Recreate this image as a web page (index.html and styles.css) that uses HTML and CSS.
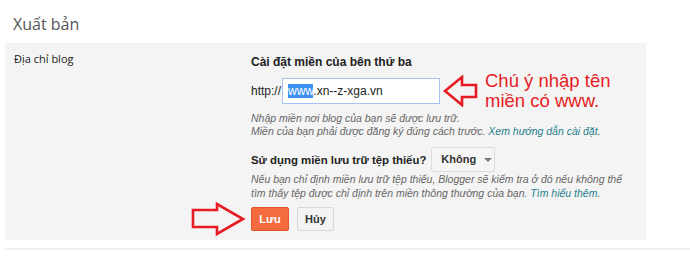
FILE: index.html
```html
<!DOCTYPE html>
<html lang="vi">
<head>
<meta charset="utf-8">
<link rel="stylesheet" href="styles.css">
</head>
<body>
<h1 class="title">Xuất bản</h1>
<section class="panel">
  <div class="label">Địa chỉ blog</div>
  <div class="main">
    <div class="heading">Cài đặt miền của bên thứ ba</div>
    <div class="url-row">
      <span class="proto">http://</span>
      <div class="input"><span class="sel">www</span>.xn--z-xga.vn</div>
      <svg class="arrow-left" width="35" height="32" viewBox="0 0 35 32"><polygon points="2,16 19,2 19,10 33,10 33,22 19,22 19,30" fill="none" stroke="#e61b23" stroke-width="2.6" stroke-linejoin="miter"/></svg>
      <div class="note">Chú ý nhập tên<br>miền có www.</div>
    </div>
    <p class="help">Nhập miền nơi blog của bạn sẽ được lưu trữ.<br>Miền của bạn phải được đăng ký đúng cách trước. <a class="link">Xem hướng dẫn cài đặt.</a></p>
    <div class="fallback-row">
      <span class="heading heading-sm">Sử dụng miền lưu trữ tệp thiếu?</span>
      <div class="select">Không <span class="caret"></span></div>
    </div>
    <p class="help help2">Nếu bạn chỉ định miền lưu trữ tệp thiếu, Blogger sẽ kiểm tra ở đó nếu không thể<br>tìm thấy tệp được chỉ định trên miền thông thường của bạn. <a class="link">Tìm hiểu thêm.</a></p>
    <div class="buttons">
      <button class="btn btn-save">Lưu</button>
      <button class="btn btn-cancel">Hủy</button>
    </div>
  </div>
  <svg class="arrow-right" width="56" height="36" viewBox="0 0 56 36"><polygon points="3,9 27,9 27,3 53,18 27,33 27,26 3,26" fill="none" stroke="#e61b23" stroke-width="2.6" stroke-linejoin="miter"/></svg>
</section>
<div class="rule"></div>
</body>
</html>
```

FILE: styles.css
```css
html, body {
  margin: 0;
  padding: 0;
  background: #fff;
}
body {
  font-family: "Liberation Sans", Arial, sans-serif;
  color: #222;
  width: 690px;
  height: 267px;
  overflow: hidden;
}
.title {
  margin: 0;
  padding: 13px 0 0 13px;
  height: 30px;
  font-family: "Open Sans", sans-serif;
  font-weight: 400;
  font-size: 16px;
  line-height: 22px;
  color: #555;
  box-sizing: border-box;
}
.panel {
  position: relative;
  display: flex;
  margin: 13px 0 0 5px;
  width: 641px;
  height: 197px;
  box-sizing: border-box;
  padding: 8px 9px;
  background: #f4f4f4;
}
.label {
  width: 237px;
  flex: none;
  font-family: "Open Sans", sans-serif;
  font-size: 11px;
  line-height: 16px;
  color: #222;
}
.main {
  display: flex;
  flex-direction: column;
}
.heading {
  font-weight: 700;
  font-size: 12px;
  line-height: 16px;
  color: #222;
  margin-top: 3px;
}
.heading-sm {
  font-size: 11.4px;
}
.url-row {
  display: flex;
  align-items: center;
  height: 40px;
  margin-top: 1px;
}
.proto {
  font-size: 12px;
  color: #222;
  width: 31px;
}
.input {
  width: 158px;
  height: 26px;
  box-sizing: border-box;
  border: 1px solid #a6c2f0;
  background: #fff;
  padding: 0 0 0 5px;
  font-size: 12px;
  line-height: 24px;
  color: #222;
}
.sel {
  background: #3d91f2;
  color: #fff;
}
.arrow-left {
  margin-left: 3px;
  flex: none;
}
.note {
  margin-left: 7px;
  font-size: 18.5px;
  line-height: 20px;
  color: #e61b23;
}
.help {
  margin: 1px 0 0;
  font-size: 10.5px;
  font-style: italic;
  line-height: 13px;
  color: #666;
}
.help2 {
  margin-top: 0;
  line-height: 14px;
}
.link {
  color: #1e7f8c;
  text-decoration: none;
}
.fallback-row {
  display: flex;
  align-items: center;
  margin-top: 9px;
  height: 25px;
}
.fallback-row .heading {
  margin-top: 0;
}
.select {
  margin-left: 5px;
  width: 64px;
  height: 25px;
  box-sizing: border-box;
  border: 1px solid #dcdcdc;
  border-radius: 2px;
  background: #f5f5f5;
  font-weight: 700;
  font-size: 11px;
  line-height: 23px;
  color: #333;
  padding-left: 9px;
  display: flex;
  align-items: center;
  gap: 8px;
}
.caret {
  width: 0;
  height: 0;
  border-left: 4px solid transparent;
  border-right: 4px solid transparent;
  border-top: 4px solid #777;
}
.buttons {
  display: flex;
  gap: 8px;
  margin-top: 7px;
}
.btn {
  height: 24px;
  padding: 0;
  box-sizing: border-box;
  font-family: "Liberation Sans", Arial, sans-serif;
  font-weight: 700;
  font-size: 11px;
  border-radius: 2px;
}
.btn-save {
  width: 38px;
  background: #f46c3e;
  border: 1px solid #e0562a;
  color: #fff;
}
.btn-cancel {
  width: 37px;
  background: #f3f3f3;
  border: 1px solid #d8d8d8;
  color: #333;
}
.arrow-right {
  position: absolute;
  left: 185px;
  top: 158px;
}
.rule {
  margin: 8px 0 0 5px;
  height: 2px;
  background: #efefef;
}
```
